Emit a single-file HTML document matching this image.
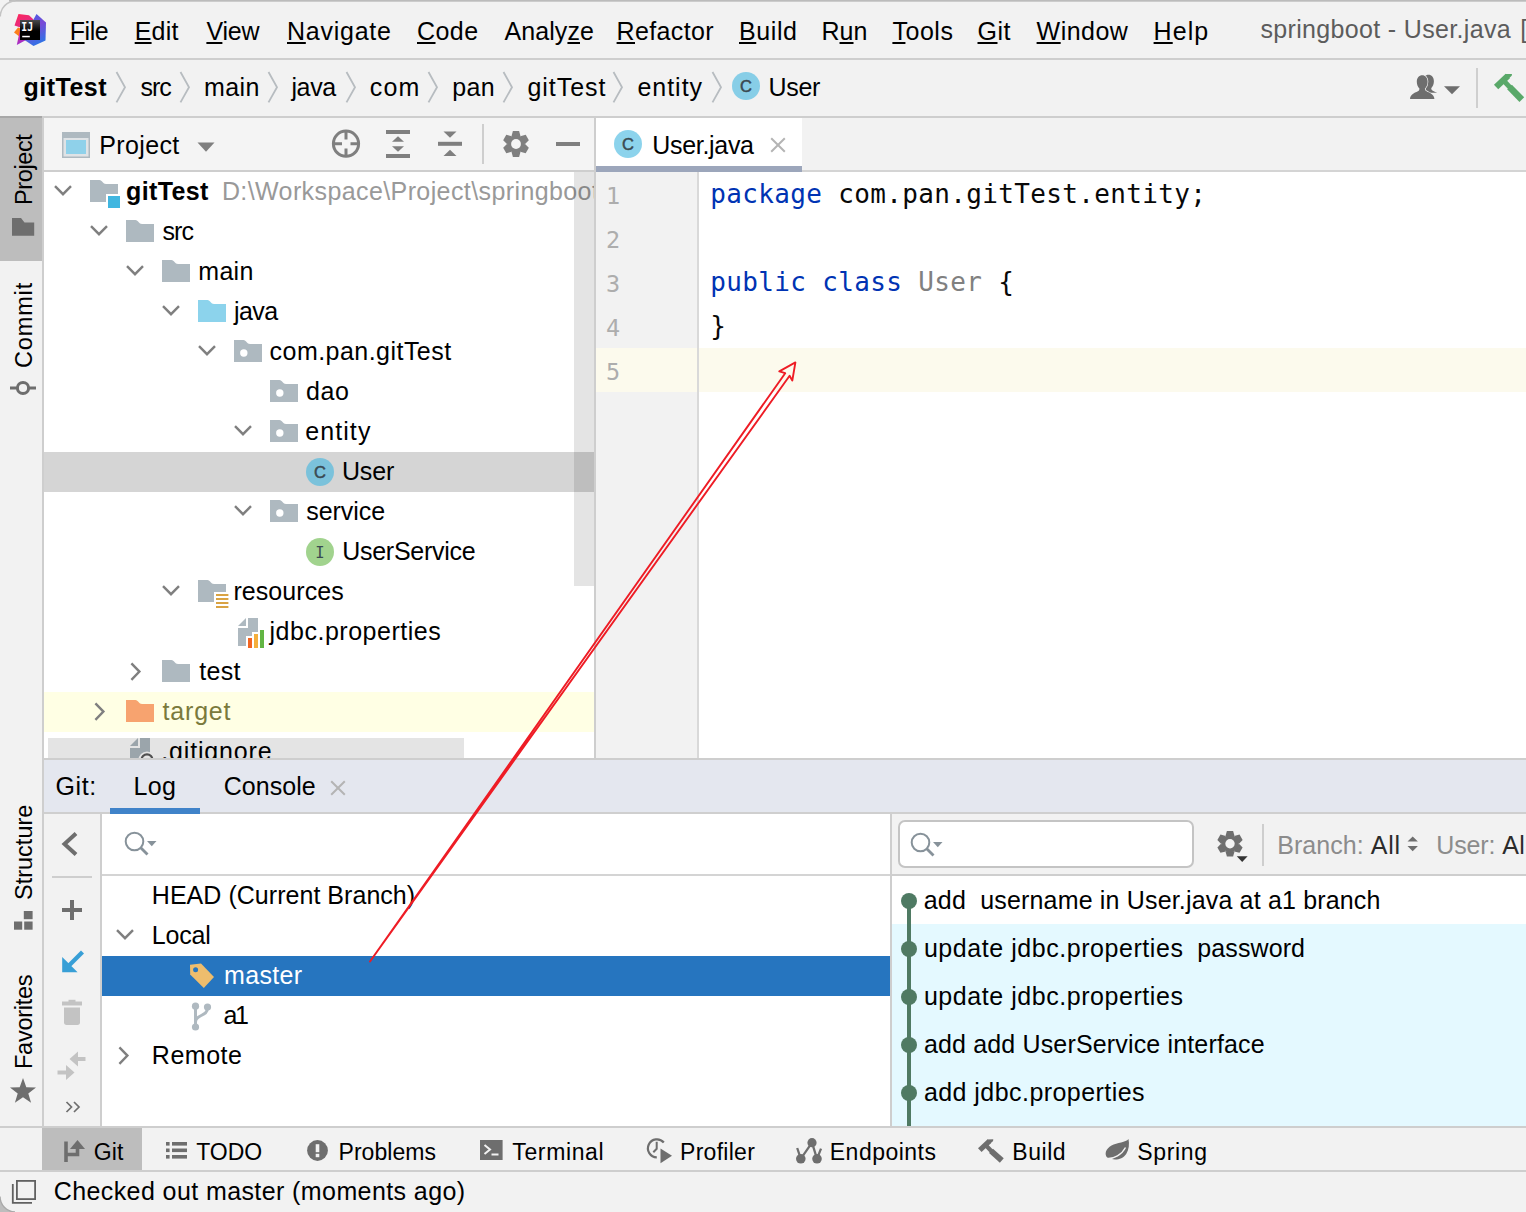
<!DOCTYPE html>
<html lang="en"><head><meta charset="utf-8"><title>springboot - User.java</title>
<style>
html,body{margin:0;padding:0}
body{width:1526px;height:1212px;overflow:hidden;position:relative;background:#f2f2f2;font-family:"Liberation Sans", sans-serif;font-size:25px;color:#000;}
.b{position:absolute;box-sizing:border-box}
.i{position:absolute;overflow:visible}
.t{position:absolute;white-space:pre;line-height:30px;height:30px}
.t u{text-decoration-thickness:2px;text-underline-offset:1.6px}
.vt{position:absolute;white-space:pre;line-height:30px;height:30px;font-size:24px;transform-origin:0 0;transform:rotate(-90deg)}
.code{position:absolute;white-space:pre;font-family:"DejaVu Sans Mono", "Liberation Mono", monospace;font-size:26px;letter-spacing:0.348px;line-height:44px;height:44px;color:#080808}
.kw{color:#0033b3} .un{color:#808080}
.ln{position:absolute;font-family:"DejaVu Sans Mono", "Liberation Mono", monospace;font-size:23.5px;line-height:44px;height:44px;color:#adadad;left:605.9px}
nav,aside,main,section,header,footer,div.w,ul,li{display:block;margin:0;padding:0;list-style:none}
</style></head><body>

<header>
<div class="b" style="left:0;top:0;width:1526px;height:58px;background:#f2f2f2"></div>
<div class="b" style="left:0;top:58px;width:1526px;height:2px;background:#cecece"></div>
<svg class="i" style="left:14px;top:14px" width="32" height="32" viewBox="0 0 32 32" ><defs><linearGradient id="lg1" x1="0" y1="0" x2="0.3" y2="1"><stop offset="0" stop-color="#fe2857"/><stop offset="0.55" stop-color="#e02a8c"/><stop offset="1" stop-color="#9b2fd0"/></linearGradient>
<linearGradient id="lg2" x1="0.2" y1="0" x2="0.6" y2="1"><stop offset="0" stop-color="#3d63e8"/><stop offset="0.45" stop-color="#7a49d6"/><stop offset="1" stop-color="#2d74e6"/></linearGradient>
<linearGradient id="lg3" x1="0" y1="0" x2="0" y2="1"><stop offset="0" stop-color="#4a4a4a"/><stop offset="0.55" stop-color="#000"/></linearGradient></defs>
<path d="M0 18.5L4 13.5 8 15 6 23z" fill="#fc801d"/>
<path d="M4.5 0L15 1.2 19.5 5.5 12 26 2.8 31 6.5 13.5 0.5 11.5z" fill="url(#lg1)"/>
<path d="M22.5 0L32 8.5 31.5 26.5 19.5 32 9 25 19.5 5.5z" fill="url(#lg2)"/>
<rect x="6" y="6" width="20" height="20" fill="url(#lg3)"/>
<text transform="translate(7.300 17.300) scale(0.800 1)" font-family='"DejaVu Sans Mono","Liberation Mono",monospace' font-weight="bold" font-size="12.300" fill="#fff">IJ</text>
<rect x="8.200" y="21.800" width="7.600" height="1.500" fill="#fff"/></svg>
<nav><span class="t mi" style="left:69.70px;top:16.00px;letter-spacing:-0.426px;"><u>F</u>ile</span>
<span class="t mi" style="left:134.70px;top:16.00px;letter-spacing:0.222px;"><u>E</u>dit</span>
<span class="t mi" style="left:206.40px;top:16.00px;letter-spacing:-0.227px;"><u>V</u>iew</span>
<span class="t mi" style="left:287.00px;top:16.00px;letter-spacing:0.748px;"><u>N</u>avigate</span>
<span class="t mi" style="left:417.00px;top:16.00px;letter-spacing:0.446px;"><u>C</u>ode</span>
<span class="t mi" style="left:504.60px;top:16.00px;letter-spacing:0.061px;">Analy<u>z</u>e</span>
<span class="t mi" style="left:616.60px;top:16.00px;letter-spacing:0.349px;"><u>R</u>efactor</span>
<span class="t mi" style="left:739.00px;top:16.00px;letter-spacing:0.578px;"><u>B</u>uild</span>
<span class="t mi" style="left:821.40px;top:16.00px;letter-spacing:0.071px;">R<u>u</u>n</span>
<span class="t mi" style="left:892.40px;top:16.00px;letter-spacing:0.535px;"><u>T</u>ools</span>
<span class="t mi" style="left:977.50px;top:16.00px;letter-spacing:0.550px;"><u>G</u>it</span>
<span class="t mi" style="left:1036.60px;top:16.00px;letter-spacing:0.468px;"><u>W</u>indow</span>
<span class="t mi" style="left:1153.60px;top:16.00px;letter-spacing:1.063px;"><u>H</u>elp</span>
<span class="t title" style="left:1260.40px;top:14.10px;letter-spacing:0.339px;color:#5c5c5c;">springboot - User.java</span>
<span class="t title" style="left:1520.30px;top:14.10px;letter-spacing:0.000px;color:#5c5c5c;">[</span></nav>
</header>
<nav>
<div class="b" style="left:0;top:116px;width:1526px;height:2px;background:#cecece"></div>
<span class="t" style="left:23.60px;top:72.20px;letter-spacing:0.472px;font-weight:bold;">gitTest</span>
<span class="t" style="left:140.50px;top:72.20px;letter-spacing:-1.063px;">src</span>
<span class="t" style="left:204.00px;top:72.20px;letter-spacing:0.406px;">main</span>
<span class="t" style="left:291.40px;top:72.20px;letter-spacing:-0.353px;">java</span>
<span class="t" style="left:369.70px;top:72.20px;letter-spacing:1.248px;">com</span>
<span class="t" style="left:452.20px;top:72.20px;letter-spacing:0.396px;">pan</span>
<span class="t" style="left:527.50px;top:72.20px;letter-spacing:0.932px;">gitTest</span>
<span class="t" style="left:637.40px;top:72.20px;letter-spacing:0.989px;">entity</span>
<span class="t" style="left:768.40px;top:72.20px;letter-spacing:-0.253px;">User</span>
<svg class="i" style="left:113.5px;top:70px" width="14" height="34" viewBox="0 0 14 34" ><path d="M2.5 2l8.500 15.200-8.500 15.200" fill="none" stroke="#b7bcc0" stroke-width="1.800"/></svg>
<svg class="i" style="left:177.8px;top:70px" width="14" height="34" viewBox="0 0 14 34" ><path d="M2.5 2l8.500 15.200-8.500 15.200" fill="none" stroke="#b7bcc0" stroke-width="1.800"/></svg>
<svg class="i" style="left:265.7px;top:70px" width="14" height="34" viewBox="0 0 14 34" ><path d="M2.5 2l8.500 15.200-8.500 15.200" fill="none" stroke="#b7bcc0" stroke-width="1.800"/></svg>
<svg class="i" style="left:343.5px;top:70px" width="14" height="34" viewBox="0 0 14 34" ><path d="M2.5 2l8.500 15.200-8.500 15.200" fill="none" stroke="#b7bcc0" stroke-width="1.800"/></svg>
<svg class="i" style="left:426px;top:70px" width="14" height="34" viewBox="0 0 14 34" ><path d="M2.5 2l8.500 15.200-8.500 15.200" fill="none" stroke="#b7bcc0" stroke-width="1.800"/></svg>
<svg class="i" style="left:501px;top:70px" width="14" height="34" viewBox="0 0 14 34" ><path d="M2.5 2l8.500 15.200-8.500 15.200" fill="none" stroke="#b7bcc0" stroke-width="1.800"/></svg>
<svg class="i" style="left:611.4px;top:70px" width="14" height="34" viewBox="0 0 14 34" ><path d="M2.5 2l8.500 15.200-8.500 15.200" fill="none" stroke="#b7bcc0" stroke-width="1.800"/></svg>
<svg class="i" style="left:709.5px;top:70px" width="14" height="34" viewBox="0 0 14 34" ><path d="M2.5 2l8.500 15.200-8.500 15.200" fill="none" stroke="#b7bcc0" stroke-width="1.800"/></svg>
<svg class="i" style="left:731px;top:71px" width="30" height="30" viewBox="0 0 30 30" ><circle cx="15" cy="15" r="14" fill="#40b6e0" fill-opacity="0.6"/><text x="15" y="20.9" text-anchor="middle" font-family='"Liberation Sans",sans-serif' font-size="16.5" font-weight="normal" fill="#3a4a52" stroke="#3a4a52" stroke-width="0.5">C</text></svg>
<svg class="i" style="left:1408px;top:74px" width="54" height="28" viewBox="0 0 54 28" ><clipPath id="ucl"><rect x="0" y="0" width="40" height="18.800"/></clipPath>
<g clip-path="url(#ucl)"><path d="M2 25c0-5.500 6.500-6.500 9-8.500l.500-1.700c-1.600-1.600-2.700-4.300-2.700-7 0-4 2.300-6.500 5.400-6.500s5.400 2.500 5.400 6.500c0 2.700-1.100 5.400-2.700 7l.500 1.700c2.500 2 9 3 9 8.500z" transform="translate(6.300 -0.500)" fill="#6e6e6e"/></g>
<path d="M2 25c0-5.500 6.500-6.500 9-8.500l.500-1.700c-1.600-1.600-2.700-4.300-2.700-7 0-4 2.300-6.500 5.400-6.500s5.400 2.500 5.400 6.500c0 2.700-1.100 5.400-2.700 7l.500 1.700c2.500 2 9 3 9 8.500z" fill="#6e6e6e" stroke="#f2f2f2" stroke-width="1.400" paint-order="stroke"/>
<path d="M36 12.200h16l-8 8z" fill="#6e6e6e"/></svg>
<div class="b" style="left:1476px;top:68px;width:2px;height:40px;background:#cfcfcf"></div>
<svg class="i" style="left:1490px;top:70px" width="36" height="36" viewBox="0 0 36 36" ><g stroke="#59a869" fill="none"><path d="M6.100 17L17.800 5.900" stroke-width="6.200"/><path d="M13.500 10.500L21.500 19" stroke-width="4.800"/><path d="M19.500 17L31.800 29.600" stroke-width="6.600"/></g><path d="M15.300 4.100l6.700-.2-.3 1.800-3.200 3z" fill="#59a869"/></svg>
</nav>
<aside>
<div class="b" style="left:0;top:118px;width:42px;height:1008px;background:#f2f2f2"></div>
<div class="b" style="left:0;top:116px;width:42px;height:2px;background:#a8a8a8"></div>
<div class="b" style="left:0;top:118px;width:42px;height:143px;background:#bdbdbd"></div>
<div class="b" style="left:42px;top:118px;width:2px;height:1008px;background:#cecece"></div>
<span class="vt" style="left:9.20px;top:205.10px;font-size:23.5px;letter-spacing:-0.385px">Project</span>
<span class="vt" style="left:9.20px;top:368.00px;font-size:23.5px;letter-spacing:0.857px">Commit</span>
<span class="vt" style="left:9.20px;top:899.80px;font-size:23.5px;letter-spacing:0.003px">Structure</span>
<span class="vt" style="left:9.20px;top:1069.40px;font-size:23.5px;letter-spacing:-0.261px">Favorites</span>
<svg class="i" style="left:12px;top:218px" width="22" height="18" viewBox="0 0 22 18" ><path d="M0 0h9l3.500 4.500h9.700v13.300h-22.200z" fill="#6e6e6e"/></svg>
<svg class="i" style="left:9px;top:380px" width="28" height="16" viewBox="0 0 28 16" ><path d="M1 8h26" stroke="#6e6e6e" stroke-width="3"/><circle cx="14" cy="8" r="5.600" fill="#f2f2f2" stroke="#6e6e6e" stroke-width="3"/></svg>
<svg class="i" style="left:13.5px;top:911px" width="19" height="19" viewBox="0 0 19 19" ><g fill="#6e6e6e"><rect x="9.800" y="0" width="8.800" height="8.200"/><rect x="0" y="10.500" width="8.200" height="8.200"/><rect x="10.200" y="10.500" width="8.400" height="8.200"/></g></svg>
<svg class="i" style="left:10px;top:1078px" width="26" height="25" viewBox="0 0 26 25" ><path d="M13 0l3.300 9.300 9.700.2-7.700 6 2.800 9.300-8.100-5.500-8.100 5.500 2.800-9.300-7.700-6 9.700-.2z" fill="#6e6e6e"/></svg>
</aside>
<aside>
<div class="b" style="left:44px;top:118px;width:550px;height:52px;background:#f4f4f4"></div>
<div class="b" style="left:44px;top:170px;width:550px;height:2px;background:#cecece"></div>
<div class="b" style="left:44px;top:172px;width:550px;height:588px;background:#fff"></div>
<div class="b" style="left:44px;top:452px;width:550px;height:40px;background:#d5d5d5"></div>
<div class="b" style="left:44px;top:692px;width:550px;height:40px;background:#ffffe4"></div>
<svg class="i" style="left:62px;top:132px" width="28" height="26" viewBox="0 0 28 26" ><rect x="0.750" y="0.750" width="26.500" height="24.500" fill="#dfe3e6" stroke="#aeb9c0" stroke-width="1.500"/><rect x="0" y="0" width="28" height="6" fill="#aeb9c0"/><rect x="4" y="8" width="20" height="14" fill="#8fd1ea"/></svg>
<svg class="i" style="left:197px;top:142px" width="18" height="10" viewBox="0 0 18 10" ><path d="M0.500 0.500h17l-8.500 9.300z" fill="#7f7f7f"/></svg>
<svg class="i" style="left:331px;top:129px" width="30" height="30" viewBox="0 0 30 30" ><circle cx="15" cy="14.700" r="12.600" fill="none" stroke="#7f7f7f" stroke-width="3"/><path d="M15 2v8.500M15 19.500v8M2.500 14.700h8.500M19.500 14.700h8" stroke="#7f7f7f" stroke-width="3"/></svg>
<svg class="i" style="left:386px;top:130px" width="24" height="28" viewBox="0 0 24 28" ><g fill="#7f7f7f"><rect x="0" y="0" width="24" height="4"/><rect x="0" y="24" width="24" height="4"/><path d="M6 11.800h12l-6-5.600z"/><path d="M6 16.200h12l-6 5.600z"/></g></svg>
<svg class="i" style="left:438px;top:131px" width="24" height="26" viewBox="0 0 24 26" ><g fill="#7f7f7f"><rect x="0" y="10.800" width="24" height="4"/><path d="M5.500 0.500h13l-6.500 6.300z"/><path d="M5.500 25h13l-6.500-6.300z"/></g></svg>
<div class="b" style="left:482px;top:124px;width:2px;height:40px;background:#cecece"></div>
<svg class="i" style="left:500px;top:128px" width="32" height="32" viewBox="0 0 32 32" ><g transform="translate(16 16)" fill="#7f7f7f"><path d="M-4.600 -7.500L-3.100 -13H3.100L4.600 -7.500z" transform="rotate(0)"/><path d="M-4.600 -7.500L-3.100 -13H3.100L4.600 -7.500z" transform="rotate(60)"/><path d="M-4.600 -7.500L-3.100 -13H3.100L4.600 -7.500z" transform="rotate(120)"/><path d="M-4.600 -7.500L-3.100 -13H3.100L4.600 -7.500z" transform="rotate(180)"/><path d="M-4.600 -7.500L-3.100 -13H3.100L4.600 -7.500z" transform="rotate(240)"/><path d="M-4.600 -7.500L-3.100 -13H3.100L4.600 -7.500z" transform="rotate(300)"/><circle r="8.9"/><circle r="4.9" fill="#f4f4f4"/></g></svg>
<div class="b" style="left:556px;top:141.500px;width:24px;height:4px;background:#7f7f7f"></div>
<span class="t" style="left:99.20px;top:129.70px;letter-spacing:0.373px;">Project</span>
<ul>
<li>
<svg class="i" style="left:53.2px;top:184px" width="20" height="14" viewBox="0 0 20 14" ><path d="M2 2.2l8 8 8-8" fill="none" stroke="#7f7f7f" stroke-width="2.4"/></svg>
<svg class="i" style="left:90px;top:180px" width="30" height="30" viewBox="0 0 30 30" ><path d="M0 0h9.500c2.500 0 3.500 4 6.500 4h12v18h-28z" fill="#9aa7b0" fill-opacity="0.8"/><rect x="16" y="14" width="14" height="14" fill="#fff"/><rect x="18" y="16" width="12" height="12" fill="#40b6e0"/></svg>
<span class="t" style="left:126.00px;top:176.30px;letter-spacing:0.389px;font-weight:bold;">gitTest</span>
<span class="t clip" style="left:221.90px;top:176.30px;letter-spacing:0.399px;color:#999;">D:\Workspace\Project\springboot</span>
</li>
<li>
<svg class="i" style="left:89.2px;top:224px" width="20" height="14" viewBox="0 0 20 14" ><path d="M2 2.2l8 8 8-8" fill="none" stroke="#7f7f7f" stroke-width="2.4"/></svg>
<svg class="i" style="left:126px;top:220px" width="30" height="30" viewBox="0 0 30 30" ><path d="M0 0h9.500c2.500 0 3.500 4 6.500 4h12v18h-28z" fill="#9aa7b0" fill-opacity="0.8"/></svg>
<span class="t" style="left:162.50px;top:216.30px;letter-spacing:-0.963px;">src</span>
</li>
<li>
<svg class="i" style="left:125.19999999999999px;top:264px" width="20" height="14" viewBox="0 0 20 14" ><path d="M2 2.2l8 8 8-8" fill="none" stroke="#7f7f7f" stroke-width="2.4"/></svg>
<svg class="i" style="left:162px;top:260px" width="30" height="30" viewBox="0 0 30 30" ><path d="M0 0h9.500c2.500 0 3.500 4 6.500 4h12v18h-28z" fill="#9aa7b0" fill-opacity="0.8"/></svg>
<span class="t" style="left:198.30px;top:256.30px;letter-spacing:0.272px;">main</span>
</li>
<li>
<svg class="i" style="left:161.2px;top:304px" width="20" height="14" viewBox="0 0 20 14" ><path d="M2 2.2l8 8 8-8" fill="none" stroke="#7f7f7f" stroke-width="2.4"/></svg>
<svg class="i" style="left:198px;top:300px" width="30" height="30" viewBox="0 0 30 30" ><path d="M0 0h9.500c2.500 0 3.500 4 6.500 4h12v18h-28z" fill="#40b6e0" fill-opacity="0.6"/></svg>
<span class="t" style="left:234.00px;top:296.30px;letter-spacing:-0.586px;">java</span>
</li>
<li>
<svg class="i" style="left:197.2px;top:344px" width="20" height="14" viewBox="0 0 20 14" ><path d="M2 2.2l8 8 8-8" fill="none" stroke="#7f7f7f" stroke-width="2.4"/></svg>
<svg class="i" style="left:234px;top:340px" width="30" height="30" viewBox="0 0 30 30" ><path d="M0 0h9.500c2.500 0 3.500 4 6.500 4h12v18h-28z" fill="#9aa7b0" fill-opacity="0.8"/><circle cx="9.800" cy="13" r="3.700" fill="#fff"/></svg>
<span class="t" style="left:269.60px;top:336.30px;letter-spacing:0.461px;">com.pan.gitTest</span>
</li>
<li>
<svg class="i" style="left:270px;top:380px" width="30" height="30" viewBox="0 0 30 30" ><path d="M0 0h9.500c2.500 0 3.500 4 6.500 4h12v18h-28z" fill="#9aa7b0" fill-opacity="0.8"/><circle cx="9.800" cy="13" r="3.700" fill="#fff"/></svg>
<span class="t" style="left:306.00px;top:376.30px;letter-spacing:0.596px;">dao</span>
</li>
<li>
<svg class="i" style="left:233.2px;top:424px" width="20" height="14" viewBox="0 0 20 14" ><path d="M2 2.2l8 8 8-8" fill="none" stroke="#7f7f7f" stroke-width="2.4"/></svg>
<svg class="i" style="left:270px;top:420px" width="30" height="30" viewBox="0 0 30 30" ><path d="M0 0h9.500c2.500 0 3.500 4 6.500 4h12v18h-28z" fill="#9aa7b0" fill-opacity="0.8"/><circle cx="9.800" cy="13" r="3.700" fill="#fff"/></svg>
<span class="t" style="left:305.20px;top:416.30px;letter-spacing:1.089px;">entity</span>
</li>
<li>
<svg class="i" style="left:305.2px;top:457px" width="30" height="30" viewBox="0 0 30 30" ><circle cx="15" cy="15" r="14" fill="#40b6e0" fill-opacity="0.6"/><text x="15" y="20.9" text-anchor="middle" font-family='"Liberation Sans",sans-serif' font-size="16.5" font-weight="normal" fill="#3a4a52" stroke="#3a4a52" stroke-width="0.5">C</text></svg>
<span class="t" style="left:341.90px;top:456.30px;letter-spacing:-0.119px;">User</span>
</li>
<li>
<svg class="i" style="left:233.2px;top:504px" width="20" height="14" viewBox="0 0 20 14" ><path d="M2 2.2l8 8 8-8" fill="none" stroke="#7f7f7f" stroke-width="2.4"/></svg>
<svg class="i" style="left:270px;top:500px" width="30" height="30" viewBox="0 0 30 30" ><path d="M0 0h9.500c2.500 0 3.500 4 6.500 4h12v18h-28z" fill="#9aa7b0" fill-opacity="0.8"/><circle cx="9.800" cy="13" r="3.700" fill="#fff"/></svg>
<span class="t" style="left:306.20px;top:496.30px;letter-spacing:-0.031px;">service</span>
</li>
<li>
<svg class="i" style="left:305px;top:537px" width="30" height="30" viewBox="0 0 30 30" ><circle cx="15" cy="15" r="14" fill="#62b543" fill-opacity="0.6"/><text x="15" y="20.6" text-anchor="middle" font-family='"DejaVu Sans Mono","Liberation Mono",monospace' font-size="15.5" font-weight="normal" fill="#3a4a52" stroke="#3a4a52" stroke-width="0">I</text></svg>
<span class="t" style="left:342.20px;top:536.30px;letter-spacing:-0.264px;">UserService</span>
</li>
<li>
<svg class="i" style="left:161.2px;top:584px" width="20" height="14" viewBox="0 0 20 14" ><path d="M2 2.2l8 8 8-8" fill="none" stroke="#7f7f7f" stroke-width="2.4"/></svg>
<svg class="i" style="left:198px;top:580px" width="30" height="30" viewBox="0 0 30 30" ><path d="M0 0h9.500c2.500 0 3.500 4 6.500 4h12v18h-28z" fill="#9aa7b0" fill-opacity="0.8"/><rect x="16" y="12" width="14" height="18" fill="#fff"/><g fill="#d9a343"><rect x="18" y="14" width="12.400" height="2"/><rect x="18" y="18" width="12.400" height="2"/><rect x="18" y="22" width="12.400" height="2"/><rect x="18" y="26" width="12.400" height="2"/></g></svg>
<span class="t" style="left:233.40px;top:576.30px;letter-spacing:0.067px;">resources</span>
</li>
<li>
<svg class="i" style="left:238px;top:618px" width="28" height="30" viewBox="0 0 28 30" ><path d="M10 0H20V14H14V18H8V28H0V10H10z" fill="#aeb9c0"/><path d="M0 8L8 0V8z" fill="#aeb9c0"/><rect x="10" y="20" width="4" height="10" fill="#f26522"/><rect x="16" y="16" width="4" height="14" fill="#f4af3d"/><rect x="22" y="12" width="4" height="18" fill="#62b543"/></svg>
<span class="t" style="left:269.50px;top:616.30px;letter-spacing:0.516px;">jdbc.properties</span>
</li>
<li>
<svg class="i" style="left:128.5px;top:661px" width="14" height="22" viewBox="0 0 14 22" ><path d="M2.4 2.4l8 8.2-8 8.2" fill="none" stroke="#7f7f7f" stroke-width="2.4"/></svg>
<svg class="i" style="left:162px;top:660px" width="30" height="30" viewBox="0 0 30 30" ><path d="M0 0h9.500c2.500 0 3.500 4 6.500 4h12v18h-28z" fill="#9aa7b0" fill-opacity="0.8"/></svg>
<span class="t" style="left:199.20px;top:656.30px;letter-spacing:0.350px;">test</span>
</li>
<li>
<svg class="i" style="left:92.5px;top:701px" width="14" height="22" viewBox="0 0 14 22" ><path d="M2.4 2.4l8 8.2-8 8.2" fill="none" stroke="#7f7f7f" stroke-width="2.4"/></svg>
<svg class="i" style="left:126px;top:700px" width="30" height="30" viewBox="0 0 30 30" ><path d="M0 0h9.500c2.500 0 3.500 4 6.500 4h12v18h-28z" fill="#f26522" fill-opacity="0.6"/></svg>
<span class="t" style="left:162.50px;top:696.30px;letter-spacing:0.824px;color:#7a7a3c;">target</span>
</li>
<li>
<svg class="i" style="left:130px;top:738px" width="24" height="30" viewBox="0 0 24 30" ><path d="M10 0H20V28H0V10H10z" fill="#aeb9c0"/><path d="M0 8L8 0V8z" fill="#aeb9c0"/><circle cx="17" cy="22" r="8.600" fill="#fff"/><circle cx="17" cy="22" r="5.600" fill="none" stroke="#5a5a5a" stroke-width="2.200"/></svg>
<span class="t gi" style="left:161.30px;top:736.30px;letter-spacing:0.829px;">.gitignore</span>
</li>
</ul>
<div class="b" style="left:574px;top:172px;width:20px;height:414px;background:rgba(0,0,0,0.105)"></div>
<div class="b" style="left:48px;top:738px;width:416px;height:20px;background:rgba(0,0,0,0.105)"></div>
</aside>
<main>
<div class="b" style="left:594px;top:118px;width:2px;height:640px;background:#cecece"></div>
<div class="b" style="left:596px;top:118px;width:930px;height:52px;background:#f2f2f2"></div>
<div class="b" style="left:596px;top:170px;width:930px;height:2px;background:#d4d4d4"></div>
<div class="b" style="left:596px;top:118px;width:206px;height:48px;background:#fff"></div>
<div class="b" style="left:596px;top:166px;width:206px;height:6px;background:#9ca6bb"></div>
<svg class="i" style="left:613px;top:129px" width="30" height="30" viewBox="0 0 30 30" ><circle cx="15" cy="15" r="14" fill="#40b6e0" fill-opacity="0.6"/><text x="15" y="20.9" text-anchor="middle" font-family='"Liberation Sans",sans-serif' font-size="16.5" font-weight="normal" fill="#3a4a52" stroke="#3a4a52" stroke-width="0.5">C</text></svg>
<span class="t" style="left:652.30px;top:129.70px;letter-spacing:-0.313px;">User.java</span>
<svg class="i" style="left:770px;top:136.5px" width="16" height="16" viewBox="0 0 16 16" ><path d="M1.200 1.200l13.600 13.600M14.800 1.200l-13.600 13.600" stroke="#b4b4b4" stroke-width="2" fill="none"/></svg>
<div class="b" style="left:596px;top:172px;width:101px;height:586px;background:#f2f2f2"></div>
<div class="b" style="left:697px;top:172px;width:2px;height:586px;background:#d9d9d9"></div>
<div class="b" style="left:699px;top:172px;width:827px;height:586px;background:#fff"></div>
<div class="b" style="left:596px;top:348px;width:101px;height:44px;background:#fcfaed"></div>
<div class="b" style="left:699px;top:348px;width:827px;height:44px;background:#fcfaed"></div>
<span class="ln" style="top:174.2px">1</span>
<span class="ln" style="top:218.2px">2</span>
<span class="ln" style="top:262.2px">3</span>
<span class="ln" style="top:306.2px">4</span>
<span class="ln" style="top:350.2px">5</span>
<code class="code" style="left:710.300px;top:172.3px"><span class="kw">package</span> com.pan.gitTest.entity;</code>
<code class="code" style="left:710.300px;top:260.3px"><span class="kw">public class</span> <span class="un">User</span> {</code>
<code class="code" style="left:710.300px;top:304.3px">}</code>
</main>
<section>
<div class="b" style="left:44px;top:758px;width:1482px;height:2px;background:#cecece"></div>
<div class="b" style="left:44px;top:760px;width:1482px;height:52px;background:#e4e7ef"></div>
<div class="b" style="left:44px;top:812px;width:1482px;height:2px;background:#cfcfcf"></div>
<div class="b" style="left:110px;top:808px;width:90px;height:6px;background:#4083c9"></div>
<span class="t" style="left:55.50px;top:771.40px;letter-spacing:0.618px;">Git:</span>
<span class="t" style="left:133.50px;top:771.40px;letter-spacing:0.296px;">Log</span>
<span class="t" style="left:223.70px;top:771.40px;letter-spacing:0.047px;">Console</span>
<svg class="i" style="left:330px;top:780px" width="16" height="16" viewBox="0 0 16 16" ><path d="M1.200 1.200l13.600 13.600M14.800 1.200l-13.600 13.600" stroke="#b4b4b4" stroke-width="2" fill="none"/></svg>
<div class="b" style="left:44px;top:814px;width:56px;height:312px;background:#f2f2f2"></div>
<div class="b" style="left:100px;top:814px;width:2px;height:312px;background:#cecece"></div>
<svg class="i" style="left:60px;top:830px" width="22" height="28" viewBox="0 0 22 28" ><path d="M16 3.500l-11.500 10.500 11.500 10.500" fill="none" stroke="#6e6e6e" stroke-width="4"/></svg>
<div class="b" style="left:52px;top:876px;width:40px;height:2px;background:#cecece"></div>
<svg class="i" style="left:62px;top:900px" width="20" height="20" viewBox="0 0 20 20" ><path d="M10 0v20M0 10h20" stroke="#6e6e6e" stroke-width="4"/></svg>
<svg class="i" style="left:62px;top:950px" width="23" height="23" viewBox="0 0 23 23" ><path d="M20.500 2l-15 15" stroke="#389fd6" stroke-width="4.200" fill="none"/><path d="M0.200 7v15.200h15.400z" fill="#389fd6"/></svg>
<svg class="i" style="left:62px;top:999px" width="20" height="28" viewBox="0 0 20 28" ><g fill="#c3c3c3"><rect x="6.500" y="0.800" width="7" height="3"/><rect x="0" y="2.500" width="20" height="4"/><path d="M2 8.500h16v15c0 1.500-1 2.500-2.500 2.500h-11c-1.500 0-2.500-1-2.500-2.500z"/></g></svg>
<svg class="i" style="left:57px;top:1051px" width="30" height="30" viewBox="0 0 30 30" ><g fill="#c3c3c3"><path d="M12.500 8l8.500-7.500v5.500h7.500v4h-7.500v5.500z"/><path d="M17.500 21.500l-8.500 7.500v-5.500h-8.500v-4h8.500v-5.500z"/></g></svg>
<svg class="i" style="left:65px;top:1101px" width="16" height="12" viewBox="0 0 16 12" ><path d="M1.500 1l5 5-5 5M9 1l5 5-5 5" fill="none" stroke="#6e6e6e" stroke-width="1.700"/></svg>
<div class="b" style="left:102px;top:814px;width:788px;height:60px;background:#fff"></div>
<div class="b" style="left:102px;top:874px;width:788px;height:2px;background:#d4d4d4"></div>
<div class="b" style="left:102px;top:876px;width:788px;height:250px;background:#fff"></div>
<div class="b" style="left:102px;top:956px;width:788px;height:40px;background:#2675bf"></div>
<svg class="i" style="left:123.5px;top:830.8px" width="34" height="26" viewBox="0 0 34 26" ><circle cx="10.500" cy="10.500" r="8.800" fill="none" stroke="#87929a" stroke-width="2"/><path d="M16.500 16.500l7 7" stroke="#87929a" stroke-width="2.800"/><path d="M23 10h9.500l-4.700 5.300z" fill="#87929a"/></svg>
<svg class="i" style="left:115px;top:928px" width="20" height="14" viewBox="0 0 20 14" ><path d="M2 2.2l8 8 8-8" fill="none" stroke="#7f7f7f" stroke-width="2.4"/></svg>
<svg class="i" style="left:117.3px;top:1045px" width="14" height="22" viewBox="0 0 14 22" ><path d="M2.4 2.4l8 8.2-8 8.2" fill="none" stroke="#7f7f7f" stroke-width="2.4"/></svg>
<svg class="i" style="left:189px;top:962.5px" width="27" height="27" viewBox="0 0 27 27" ><path d="M1 1.800l11-1.300 13 13.600-10.200 10.900-13.600-13.600z" fill="#eebd6d"/><circle cx="6.600" cy="6.800" r="2.500" fill="#2675bf"/></svg>
<svg class="i" style="left:191px;top:1002px" width="22" height="30" viewBox="0 0 22 30" ><g fill="none" stroke="#afb9c0" stroke-width="3"><path d="M4.500 5v20M16.500 6c0 9-12 6-12 14"/></g><g fill="#afb9c0"><circle cx="4.500" cy="4.200" r="3.600"/><circle cx="16.500" cy="5" r="3.600"/><circle cx="4.500" cy="25" r="3.600"/></g></svg>
<span class="t" style="left:151.80px;top:880.40px;letter-spacing:0.038px;">HEAD (Current Branch)</span>
<span class="t" style="left:151.80px;top:920.40px;letter-spacing:-0.203px;">Local</span>
<span class="t" style="left:224.00px;top:960.40px;letter-spacing:0.324px;color:#fff;">master</span>
<span class="t" style="left:223.60px;top:1000.40px;letter-spacing:-2.404px;">a1</span>
<span class="t" style="left:151.80px;top:1040.40px;letter-spacing:0.533px;">Remote</span>
<div class="b" style="left:890px;top:814px;width:2px;height:312px;background:#cecece"></div>
<div class="b" style="left:892px;top:814px;width:634px;height:60px;background:#f2f2f2"></div>
<div class="b" style="left:892px;top:874px;width:634px;height:2px;background:#cecece"></div>
<div class="b" style="left:892px;top:876px;width:634px;height:48px;background:#fff"></div>
<div class="b" style="left:892px;top:924px;width:634px;height:202px;background:#e4f9ff"></div>
<div class="b" style="left:898px;top:820px;width:296px;height:48px;background:#fff;border:2px solid #c4c4c4;border-radius:7px"></div>
<svg class="i" style="left:909.5px;top:831.8px" width="34" height="26" viewBox="0 0 34 26" ><circle cx="10.500" cy="10.500" r="8.800" fill="none" stroke="#87929a" stroke-width="2"/><path d="M16.500 16.500l7 7" stroke="#87929a" stroke-width="2.800"/><path d="M23 10h9.500l-4.700 5.300z" fill="#87929a"/></svg>
<svg class="i" style="left:1214px;top:828px" width="36" height="36" viewBox="0 0 36 36" ><g transform="translate(16 15.7)" fill="#6e6e6e"><path d="M-4.600 -7.500L-3.100 -12.8H3.100L4.600 -7.500z" transform="rotate(0)"/><path d="M-4.600 -7.500L-3.100 -12.8H3.100L4.600 -7.500z" transform="rotate(60)"/><path d="M-4.600 -7.500L-3.100 -12.8H3.100L4.600 -7.500z" transform="rotate(120)"/><path d="M-4.600 -7.500L-3.100 -12.8H3.100L4.600 -7.500z" transform="rotate(180)"/><path d="M-4.600 -7.500L-3.100 -12.8H3.100L4.600 -7.500z" transform="rotate(240)"/><path d="M-4.600 -7.500L-3.100 -12.8H3.100L4.600 -7.500z" transform="rotate(300)"/><circle r="8.700000000000001"/><circle r="4.700000000000001" fill="#f2f2f2"/></g><path d="M21.500 27.200h13.500l-6.750 7.300z" fill="#f2f2f2"/><path d="M22.800 28.200h10.800l-5.400 5.900z" fill="#333"/></svg>
<div class="b" style="left:1262px;top:824px;width:2px;height:42px;background:#cecece"></div>
<svg class="i" style="left:1407px;top:836px" width="12" height="16" viewBox="0 0 12 16" ><path d="M0.500 5.600h10.400l-5.200-5.200zM0.500 10h10.400l-5.200 5.200z" fill="#6e6e6e"/></svg>
<span class="t" style="left:1277.20px;top:829.90px;letter-spacing:0.065px;color:#8c8c8c;">Branch:</span>
<span class="t" style="left:1370.80px;top:829.90px;letter-spacing:0.685px;color:#2b2b2b;">All</span>
<span class="t" style="left:1436.30px;top:829.90px;letter-spacing:-0.171px;color:#8c8c8c;">User:</span>
<span class="t" style="left:1502.20px;top:829.90px;letter-spacing:0.300px;color:#2b2b2b;">All</span>
<div class="b" style="left:907.300px;top:900px;width:3.500px;height:226px;background:#4f7a63"></div>
<div class="b" style="left:901px;top:892.8px;width:16.400px;height:16.400px;border-radius:50%;background:#4f7a63"></div>
<div class="b" style="left:901px;top:940.8px;width:16.400px;height:16.400px;border-radius:50%;background:#4f7a63"></div>
<div class="b" style="left:901px;top:988.8px;width:16.400px;height:16.400px;border-radius:50%;background:#4f7a63"></div>
<div class="b" style="left:901px;top:1036.8px;width:16.400px;height:16.400px;border-radius:50%;background:#4f7a63"></div>
<div class="b" style="left:901px;top:1084.8px;width:16.400px;height:16.400px;border-radius:50%;background:#4f7a63"></div>
<ul><span class="t pre" style="left:923.80px;top:884.60px;letter-spacing:0.167px;">add  username in User.java at a1 branch</span>
<span class="t pre" style="left:923.90px;top:932.60px;letter-spacing:0.553px;">update jdbc.properties  </span>
<span class="t pre" style="left:1197.30px;top:932.60px;letter-spacing:0.101px;">password</span>
<span class="t pre" style="left:923.90px;top:980.60px;letter-spacing:0.553px;">update jdbc.properties</span>
<span class="t pre" style="left:923.90px;top:1028.60px;letter-spacing:0.158px;">add add UserService interface</span>
<span class="t pre" style="left:923.90px;top:1076.60px;letter-spacing:0.448px;">add jdbc.properties</span></ul>
</section>
<footer>
<div class="b" style="left:0;top:1126px;width:1526px;height:2px;background:#cecece"></div>
<div class="b" style="left:0;top:1128px;width:1526px;height:42px;background:#f2f2f2"></div>
<div class="b" style="left:42px;top:1128px;width:100px;height:42px;background:#bdbdbd"></div>
<div class="b" style="left:0;top:1170px;width:1526px;height:2px;background:#cecece"></div>
<div class="b" style="left:0;top:1172px;width:1526px;height:40px;background:#f2f2f2"></div>
<svg class="i" style="left:63.8px;top:1139px" width="24" height="24" viewBox="0 0 24 24" ><path d="M2 2.500v20.500" stroke="#6e6e6e" stroke-width="3.600" fill="none"/><path d="M2 15.500h11.500v-6" stroke="#6e6e6e" stroke-width="3.600" fill="none"/><path d="M6 10l7.500-9 7.500 9z" fill="#6e6e6e"/></svg>
<svg class="i" style="left:165.5px;top:1142px" width="22" height="17" viewBox="0 0 22 17" ><g fill="#6e6e6e"><rect x="0" y="0" width="3.600" height="3.600"/><rect x="6" y="0" width="15" height="3.600"/><rect x="0" y="6.500" width="3.600" height="3.600"/><rect x="6" y="6.500" width="15" height="3.600"/><rect x="0" y="13" width="3.600" height="3.600"/><rect x="6" y="13" width="15" height="3.600"/></g></svg>
<svg class="i" style="left:306.5px;top:1139.5px" width="21" height="21" viewBox="0 0 21 21" ><circle cx="10.500" cy="10.500" r="10.400" fill="#6e6e6e"/><rect x="8.700" y="4.200" width="3.600" height="8" fill="#f2f2f2"/><rect x="8.700" y="13.800" width="3.600" height="3.400" fill="#f2f2f2"/></svg>
<svg class="i" style="left:479.5px;top:1140px" width="23" height="20" viewBox="0 0 23 20" ><rect width="22.600" height="20" fill="#6e6e6e"/><path d="M4.500 5l5.500 4.500-5.500 4.500" stroke="#f2f2f2" stroke-width="2" fill="none"/><rect x="11.500" y="13.500" width="7" height="2" fill="#f2f2f2"/></svg>
<svg class="i" style="left:646px;top:1138px" width="27" height="26" viewBox="0 0 27 26" ><path d="M17.800 4.500a9 9 0 1 0-7 14.800" fill="none" stroke="#6e6e6e" stroke-width="2.200"/><path d="M10.700 3.800v7l-3.400 3.500" fill="none" stroke="#6e6e6e" stroke-width="2"/><path d="M14.500 10.500l11.500 7.300-11.500 7.400z" fill="#6e6e6e"/></svg>
<svg class="i" style="left:795px;top:1138px" width="28" height="26" viewBox="0 0 28 26" ><g fill="#6e6e6e"><circle cx="17" cy="4.700" r="4.600"/><circle cx="5.800" cy="20.800" r="4.800"/><circle cx="22" cy="20.800" r="4.800"/></g><path d="M2.200 10l3.600 10.800 11.200-16.100 5 16.100 4-10.100" fill="none" stroke="#6e6e6e" stroke-width="2.300"/></svg>
<svg class="i" style="left:977px;top:1138px" width="28" height="26" viewBox="0 0 28 26" ><g stroke="#6e6e6e" fill="none"><path d="M2.800 12.200L12.400 3.200" stroke-width="5.200"/><path d="M9 7.500L16 14.800" stroke-width="4.200"/><path d="M14 12.800L24.800 22.500" stroke-width="5.800"/></g><path d="M10.300 1.600l6-.3-.2 1.600-2.800 2.600z" fill="#6e6e6e"/></svg>
<svg class="i" style="left:1104.5px;top:1139px" width="27" height="22" viewBox="0 0 27 22" ><path d="M23.500 0C21 3.500 12 3.500 6.500 6.500 1 9.500-1 15 2.200 18.600 8 21.500 17 21.500 21.200 15 24 10.500 24.500 5 23.500 0z" fill="#6e6e6e"/><path d="M1.500 19.800C9 20 17 15.500 20.500 8.500" fill="none" stroke="#f2f2f2" stroke-width="1.400"/></svg>
<span class="t" style="left:93.80px;top:1136.60px;letter-spacing:0.050px;font-size:23px;">Git</span>
<span class="t" style="left:196.30px;top:1136.60px;letter-spacing:-0.078px;font-size:23px;">TODO</span>
<span class="t" style="left:338.50px;top:1136.60px;letter-spacing:0.037px;font-size:23px;">Problems</span>
<span class="t" style="left:512.30px;top:1136.60px;letter-spacing:0.628px;font-size:23px;">Terminal</span>
<span class="t" style="left:680.00px;top:1136.60px;letter-spacing:0.287px;font-size:23px;">Profiler</span>
<span class="t" style="left:829.80px;top:1136.60px;letter-spacing:0.475px;font-size:23px;">Endpoints</span>
<span class="t" style="left:1012.30px;top:1136.60px;letter-spacing:0.537px;font-size:23px;">Build</span>
<span class="t" style="left:1137.30px;top:1136.60px;letter-spacing:0.641px;font-size:23px;">Spring</span>
<svg class="i" style="left:12px;top:1180px" width="25" height="24" viewBox="0 0 25 24" ><path d="M0.800 4v18.900h19.200" fill="none" stroke="#616161" stroke-width="1.800"/><rect x="4.900" y="0.900" width="18.200" height="18.200" fill="none" stroke="#616161" stroke-width="1.800"/></svg>
<span class="t" style="left:53.70px;top:1176.00px;letter-spacing:0.408px;">Checked out master (moments ago)</span>
</footer>
<svg class="i" style="left:0px;top:0px" width="1526" height="1212" viewBox="0 0 1526 1212" style="pointer-events:none"><path d="M370 961.500L785.200 373.200 779.300 371.300 795.400 362.400 792.300 380.600 789.600 375.800z" fill="none" stroke="#ee1c25" stroke-width="1.900" stroke-linejoin="round"/></svg>
<svg class="i" style="left:0px;top:0px" width="1526" height="1212" viewBox="0 0 1526 1212" ><rect x="9" y="0" width="1517" height="1.700" fill="#bcbcbc"/><path d="M0.300 16.500A15.500 15.500 0 0 1 15.500 1" fill="none" stroke="#c4c4c4" stroke-width="1.500"/><path d="M0 1196.500A15.500 15.500 0 0 0 15 1212H0z" fill="#bdbdbd"/><path d="M0 1196.500A15.500 15.500 0 0 0 15 1212" fill="none" stroke="#a9a9a9" stroke-width="1.400"/></svg>
</body></html>
